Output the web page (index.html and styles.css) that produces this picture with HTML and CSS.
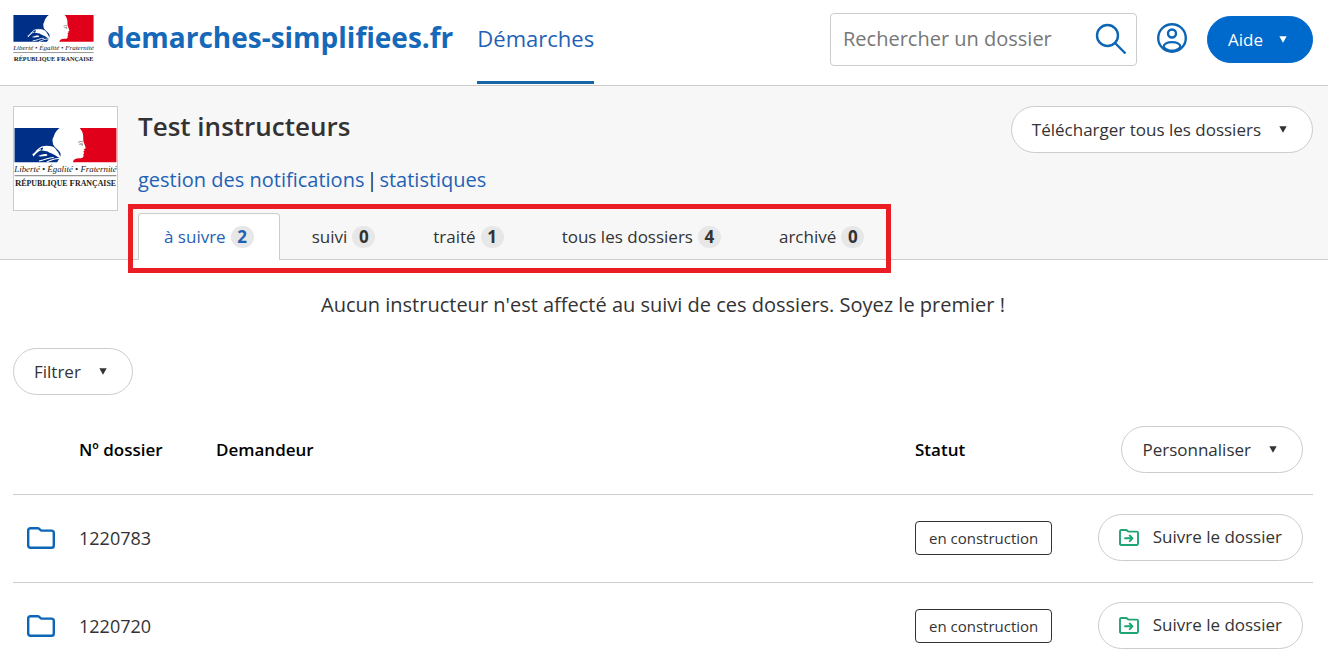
FILE: index.html
```html
<!DOCTYPE html>
<html lang="fr">
<head>
<meta charset="utf-8">
<meta name="viewport" content="width=device-width, initial-scale=1">
<title>Test instructeurs · demarches-simplifiees.fr</title>
<link rel="stylesheet" href="styles.css">
</head>
<body>
<svg class="sprite" aria-hidden="true">
  <symbol id="marianne" viewBox="0 0 104 62">
    <path fill="#002f87" d="M0 0H46C43 2 41 5 40 9C38 12 39 14 39.500 17C41 20 45 22 46.500 25C48 28 46 31 43.500 34.700H0Z"/>
    <path fill="#e1001a" d="M66.500 0H104V34.700H59.500C60 32 62 31 66 30.800C70 31 71 29 70 27L71 25.500L70 24L71.500 23L70.600 21.500L72.600 20.600C72 17 69.500 14 70 11C70.400 6 69 3 66.500 0Z"/>
    <path fill="#fff" d="M29 19C33 19.500 37 18 41 20C44 24 46 26 47 31C44 30 42 27.500 39 26.500C37 25.500 35 25 34 24L27 22.500C29.500 22 29.500 20.500 29 19ZM24 28.500C28 27 30 26 32.500 26.500C34 27 34 28.500 32 28.500C29 28.500 27 29.500 24 28.500Z"/>
    <path fill="none" stroke="#fff" stroke-width="1.100" d="M39 19.500C31 17.500 27 19 24 22S21 26 18.500 27M27 22C23 23 22 26 19 28.500M40 30C35 29.500 31 33 25 33.500M46 31C41 30.500 37 33 33 34.500"/>
    <path fill="none" stroke="#777" stroke-width="1" d="M65 14.500C67 13.500 68 13.500 69.500 14M66 16.500L69 16V18"/>
    <path stroke="#555" stroke-width=".8" d="M0 48.500H104"/>
  </symbol>
  <symbol id="folder" viewBox="0 0 28 22">
    <path fill="none" stroke="#0d66b5" stroke-width="2.400" stroke-linejoin="round" d="M3.500 1.200H11C12.800 1.200 13 3.600 14.800 3.600H24.500Q26.800 3.600 26.800 5.900V18.500Q26.800 20.800 24.500 20.800H3.500Q1.200 20.800 1.200 18.500V3.500Q1.200 1.200 3.500 1.200Z"/>
  </symbol>
  <symbol id="follow" viewBox="0 0 20 17">
    <path fill="none" stroke="#1da573" stroke-width="1.900" stroke-linejoin="round" stroke-linecap="round" d="M2.200 1H7C8.200 1 8.500 2.600 9.800 2.600H17.800Q19 2.600 19 3.800V14.800Q19 16 17.800 16H2.200Q1 16 1 14.800V2.200Q1 1 2.200 1ZM6 9.300H13.500M10.700 6.500L13.500 9.300L10.700 12.100"/>
  </symbol>
  <symbol id="caret" viewBox="0 0 8 7">
    <path fill="currentColor" d="M.3 .3H7.700L4 6.700Z"/>
  </symbol>
</svg>

<header class="topbar">
  <a class="brand" href="#">
    <svg class="brand-logo" viewBox="0 0 104 62" role="img" aria-label="République Française">
      <use href="#marianne"/>
      <text class="motto" x="52" y="45">Liberté • Égalité • Fraternité</text>
      <text class="republic" x="52" y="59"><tspan class="cap">R</tspan>ÉPUBLIQUE <tspan class="cap">F</tspan>RANÇAISE</text>
    </svg>
    <span class="brand-name">demarches-simplifiees.fr</span>
  </a>
  <nav class="main-nav"><a class="main-link" href="#">Démarches</a></nav>
  <form class="search">
    <input class="search-input" type="search" aria-label="Rechercher un dossier" placeholder="Rechercher un dossier">
    <button class="icon-button" type="button" aria-label="Rechercher">
      <svg width="32" height="32" viewBox="0 0 32 32" fill="none" stroke="#0d66b5" stroke-width="2.400"><circle cx="12.500" cy="12.500" r="10.500"/><path d="M20 20L30.500 30.500"/></svg>
    </button>
  </form>
  <button class="icon-button account" type="button" aria-label="Mon compte">
    <svg width="30" height="30" viewBox="0 0 30 30" fill="none" stroke="#0d66b5" stroke-width="2.400"><circle cx="15" cy="15" r="13.800"/><circle cx="15" cy="10.500" r="4"/><path d="M6.500 24C7 17.500 23 17.500 23.500 24C19 29 11 29 6.500 24Z"/></svg>
  </button>
  <button class="button primary" type="button">Aide <svg class="caret"><use href="#caret"/></svg></button>
</header>

<section class="procedure">
  <div class="procedure-logo">
    <svg class="procedure-mark" viewBox="0 0 104 62" role="img" aria-label="République Française">
      <use href="#marianne"/>
      <text class="motto" x="52" y="45">Liberté • Égalité • Fraternité</text>
      <text class="republic" x="52" y="59"><tspan class="cap">R</tspan>ÉPUBLIQUE <tspan class="cap">F</tspan>RANÇAISE</text>
    </svg>
  </div>
  <div class="procedure-info">
    <h1 class="title">Test instructeurs</h1>
    <p class="links"><a href="#">gestion des notifications</a> <span>|</span> <a href="#">statistiques</a></p>
    <nav class="tabs">
      <a class="tab active" href="#">à suivre <span class="count">2</span></a>
      <a class="tab" href="#">suivi <span class="count">0</span></a>
      <a class="tab" href="#">traité <span class="count">1</span></a>
      <a class="tab" href="#">tous les dossiers <span class="count">4</span></a>
      <a class="tab" href="#">archivé <span class="count">0</span></a>
      <span class="highlight"></span>
    </nav>
  </div>
  <button class="button" type="button">Télécharger tous les dossiers <svg class="caret"><use href="#caret"/></svg></button>
</section>

<main class="content">
  <p class="notice">Aucun instructeur n'est affecté au suivi de ces dossiers. Soyez le premier !</p>
  <button class="button" type="button">Filtrer <svg class="caret"><use href="#caret"/></svg></button>
  <table class="files">
    <thead>
      <tr>
        <th class="col-icon"></th>
        <th class="col-number" scope="col">Nº dossier</th>
        <th scope="col">Demandeur</th>
        <th class="col-status" scope="col">Statut</th>
        <th class="col-action"><button class="button" type="button">Personnaliser <svg class="caret"><use href="#caret"/></svg></button></th>
      </tr>
    </thead>
    <tbody>
      <tr>
        <td class="col-icon"><svg class="folder"><use href="#folder"/></svg></td>
        <td class="number">1220783</td>
        <td></td>
        <td><span class="status">en construction</span></td>
        <td class="col-action"><button class="button" type="button"><svg class="follow"><use href="#follow"/></svg>Suivre le dossier</button></td>
      </tr>
      <tr>
        <td class="col-icon"><svg class="folder"><use href="#folder"/></svg></td>
        <td class="number">1220720</td>
        <td></td>
        <td><span class="status">en construction</span></td>
        <td class="col-action"><button class="button" type="button"><svg class="follow"><use href="#follow"/></svg>Suivre le dossier</button></td>
      </tr>
    </tbody>
  </table>
</main>
</body>
</html>
```
FILE: styles.css
```css
* {
  box-sizing: border-box;
}

body {
  margin: 0;
  background: #fff;
  color: #333;
  font-family: "Open Sans", "Noto Sans", sans-serif;
  font-size: 20px;
  line-height: 24px;
}

a {
  color: #1f62b5;
  text-decoration: none;
}

button,
input {
  font: inherit;
}

svg {
  display: block;
  flex: none;
}

.sprite {
  position: absolute;
  width: 0;
  height: 0;
}

.motto {
  font: italic 9px "Liberation Serif", serif;
  text-anchor: middle;
  fill: #222;
}

.republic {
  font: bold 8px "Liberation Serif", serif;
  text-anchor: middle;
  fill: #222;
}

.cap {
  font-size: 9px;
}

/* Top bar */

.topbar {
  display: flex;
  align-items: center;
  min-height: 86px;
  padding: 0 15px 0 13px;
  border-bottom: 1px solid #ccc;
}

.brand {
  display: flex;
  align-items: center;
  gap: 13px;
  padding-bottom: 8px;
}

.brand-logo {
  width: 81px;
  height: 48px;
}

.brand-name {
  font-size: 28px;
  line-height: 40px;
  font-weight: 700;
  color: #1668b8;
  padding-bottom: 4px;
}

.main-nav {
  display: flex;
  align-self: stretch;
  margin-left: 24px;
}

.main-link {
  display: flex;
  align-items: center;
  margin-bottom: 1px;
  padding-bottom: 6px;
  border-bottom: 3px solid #1666a8;
  font-size: 22px;
}

.search {
  display: flex;
  align-items: center;
  width: 307px;
  height: 53px;
  margin: 0 20px 6px auto;
  padding: 0 9px 2px 12px;
  border: 1px solid #ccc;
  border-radius: 4px;
}

.search-input {
  flex: 1;
  min-width: 0;
  padding: 0;
  border: 0;
  outline: 0;
  background: none;
}

.search-input::placeholder {
  color: #777;
}

.icon-button {
  padding: 0;
  border: 0;
  background: none;
}

.account {
  margin: 0 20px 10px 0;
}

.button {
  display: inline-flex;
  align-items: center;
  height: 47px;
  padding: 0 20px;
  border: 1px solid #ccc;
  border-radius: 24px;
  background: #fff;
  color: #333;
  font-size: 17px;
  white-space: nowrap;
}

.caret {
  width: 8px;
  height: 7px;
  margin: 0 5px 0 18px;
}

.primary {
  margin-bottom: 6px;
  border-color: #0069cc;
  background: #0069cc;
  color: #fff;
}

.primary .caret {
  margin-left: 16px;
}

/* Procedure banner */

.procedure {
  display: flex;
  align-items: flex-start;
  padding: 20px 15px 0 13px;
  border-bottom: 1px solid #ccc;
  background: #f7f7f7;
}

.procedure-logo {
  flex: none;
  margin-right: 20px;
  padding: 21px 0;
  border: 1px solid #ccc;
  background: #fff;
}

.procedure-mark {
  width: 103px;
  height: 61px;
}

.procedure-info {
  flex: 1;
}

.title {
  margin: 0 0 20px;
  font-size: 26px;
  line-height: 41px;
  font-weight: 600;
}

.links {
  display: flex;
  gap: 2px;
  margin: 0 0 20px;
  line-height: 26px;
  color: #222;
}

.tabs {
  position: relative;
  display: flex;
  gap: 6px;
  width: fit-content;
  margin-bottom: -1px;
}

.tab {
  display: flex;
  align-items: center;
  gap: 5px;
  height: 47px;
  padding: 0 25px;
  border: 1px solid transparent;
  border-bottom: 0;
  border-radius: 4px 4px 0 0;
  color: #333;
  font-size: 17px;
}

.active {
  border-color: #ccc;
  background: #fff;
  color: #1f62b5;
}

.count {
  min-width: 23px;
  border-radius: 11px;
  background: #e7e7e7;
  font-weight: 700;
  line-height: 22px;
  text-align: center;
}

.highlight {
  position: absolute;
  inset: -9px -1px -13px -10px;
  border: 5px solid #ea1d25;
  pointer-events: none;
}

/* Files */

.content {
  padding: 32px 15px 0 13px;
}

.notice {
  margin: 0 0 30px;
  line-height: 26px;
  text-align: center;
}

.files {
  width: 100%;
  margin-top: 11px;
  border-collapse: collapse;
  font-size: 17px;
  table-layout: fixed;
}

.files th,
.files td {
  height: 88px;
  padding: 0;
  text-align: left;
  border-bottom: 1px solid #ccc;
}

.files th {
  color: #000;
  font-weight: 600;
}

.files tbody tr:last-child td {
  border-bottom: 0;
}

.files .col-icon {
  width: 66px;
  padding-left: 14px;
}

.col-number {
  width: 137px;
}

.col-status {
  width: 172px;
}

.files .col-action {
  width: 226px;
  padding-right: 10px;
  text-align: right;
}

.files td.col-action {
  padding-bottom: 2px;
}

.files .button {
  vertical-align: middle;
  font-weight: 400;
}

.number {
  font-size: 18px;
}

.folder {
  width: 28px;
  height: 22px;
}

.follow {
  width: 20px;
  height: 17px;
  margin-right: 14px;
}

.status {
  display: inline-block;
  padding: 4px 13px;
  border: 1px solid #333;
  border-radius: 4px;
  font-size: 15px;
}
```
